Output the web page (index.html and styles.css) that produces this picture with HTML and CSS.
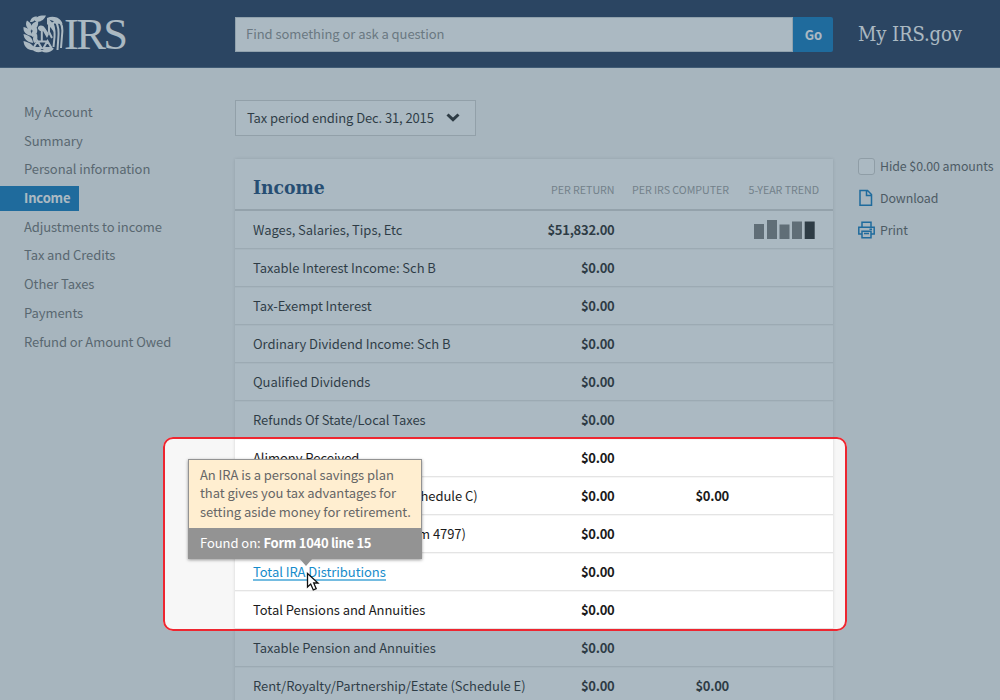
FILE: index.html
```html
<!DOCTYPE html>
<html lang="en">
<head>
<meta charset="utf-8">
<title>Income - My IRS.gov</title>
<link rel="stylesheet" href="styles.css">
</head>
<body>
<header class="topbar">
  <div class="brand">
    <svg class="emblem" width="41" height="38" viewBox="0 0 41 38" fill="#fff">
      <path d="M.5 12C6 13 9 16 9 21C3 20 0 17 .5 12ZM.5 19C6 20 10 23 10 28C4 27 1 24 .5 19ZM.5 26C6 27 11 30 12 35C5 36 1 32 .5 26ZM4 5.500C8 8 10 11 8 16C3 13 2 9 4 5.500ZM9 15.500C7 10 10 7 15 6C16 11 13 15 9 15.500ZM9 22C8 17 10 14 14 13C15 18 13 21 9 22ZM11 28C9 23 10 20 14 19C15 24 14 27 11 28ZM12 6C12 2 16 0 23 .5C21 5 17 8 12 6ZM7 7C8 3 10 1.500 14 1.500C13 5 11 7 7 7Z"/>
      <path d="M24 3C31 0 38 3 39.500 9L31 8.500L31.500 18L28 13L24 9ZM15 14C14 10 20 9 22 13L26 19L24 23L20 16L17 16ZM8 33.500C13 32 16 33 19 35C23 33 27 32 31 33.500C28 38 22 38 19 36.500C15 38 11 37 8 33.500Z"/>
      <g fill="none" stroke="#fff" stroke-width="2">
        <path d="M32 4Q40 6 39.300 17L38 33M31 5Q36 9 35.500 20L34.500 35M29 8Q32 12 31.500 22L30.500 32M26 9V17L29 23M18.800 15V27M12.500 26.500H25.500M14.500 26L10.500 33H18.500ZM24.500 26L20.500 33H28.500Z"/>
      </g>
      <path d="M26.500 4.800L31 6.200L29 7.400Z" fill="#162c51"/>
    </svg>
    <span class="brand-name">IRS</span>
  </div>
  <form class="search">
    <div class="search-field">Find something or ask a question</div>
    <div class="search-go">Go</div>
  </form>
  <div class="site-name">My IRS.gov</div>
</header>
<div class="layout">
  <nav class="sidenav">
    <a>My Account</a><a>Summary</a><a>Personal information</a><a class="current">Income</a><a>Adjustments to income</a><a>Tax and Credits</a><a>Other Taxes</a><a>Payments</a><a>Refund or Amount Owed</a>
  </nav>
  <main class="main">
    <div class="period"><span>Tax period ending Dec. 31, 2015</span>
      <svg width="14" height="10" viewBox="0 0 14 10"><path d="M1.500 1.500L7 6.700L12.500 1.500" fill="none" stroke="#1b1b1b" stroke-width="3"/></svg>
    </div>
    <section class="card">
      <div class="row head"><h1>Income</h1><span>PER RETURN</span><span>PER IRS COMPUTER</span><span>5-YEAR TREND</span></div>
      <div class="row"><span>Wages, Salaries, Tips, Etc</span><b>$51,832.00</b><b></b>
        <svg class="trend" width="62" height="19" viewBox="0 0 62 19"><path fill="#777" d="M0 4h10v15H0zM13 0h10v19H13zM25.500 4.500h10V19h-10zM38 1.500h10V19H38z"/><path fill="#1c1c1c" d="M50.700 1.500h10V19h-10z"/></svg></div>
      <div class="row"><span>Taxable Interest Income: Sch B</span><b>$0.00</b></div>
      <div class="row"><span>Tax-Exempt Interest</span><b>$0.00</b></div>
      <div class="row"><span>Ordinary Dividend Income: Sch B</span><b>$0.00</b></div>
      <div class="row"><span>Qualified Dividends</span><b>$0.00</b></div>
      <div class="row"><span>Refunds Of State/Local Taxes</span><b>$0.00</b></div>
      <div class="row"><span>Alimony Received</span><b>$0.00</b></div>
      <div class="row"><span>Business Income or Loss (Schedule C)</span><b>$0.00</b><b>$0.00</b></div>
      <div class="row"><span>Other Gains or (Losses) (Form 4797)</span><b>$0.00</b></div>
      <div class="row"><span><a class="link">Total IRA Distributions</a></span><b>$0.00</b></div>
      <div class="row"><span>Total Pensions and Annuities</span><b>$0.00</b></div>
      <div class="row"><span>Taxable Pension and Annuities</span><b>$0.00</b></div>
      <div class="row"><span>Rent/Royalty/Partnership/Estate (Schedule E)</span><b>$0.00</b><b>$0.00</b></div>
    </section>
  </main>
  <aside class="tools">
    <div><i class="checkbox"></i>Hide $0.00 amounts</div>
    <div><svg width="17" height="18" viewBox="0 0 17 18" fill="none" stroke="#0071bc" stroke-width="1.500"><path d="M2 1.500H9.500L13.500 5.500V16.300H2ZM8.500 1.500V6.500H13.500"/></svg>Download</div>
    <div><svg width="17" height="18" viewBox="0 0 17 18" fill="none" stroke="#0071bc" stroke-width="1.500"><path d="M4 6V1.200H13V6M4 13H.8V6.200H16.200V13H13M4 10.200H13V16.800H4ZM11.500 8.200H14M6 12.500H11"/></svg>Print</div>
  </aside>
</div>
<div class="spotlight"></div>
<div class="tooltip">
  <p>An IRA is a personal savings plan<br>that gives you tax advantages for<br>setting aside money for retirement.</p>
  <footer>Found on: <b>Form 1040 line 15</b></footer>
</div>
<svg class="cursor" width="14" height="20" viewBox="0 0 14 20"><path d="M1.500 1.500V15L4.700 12L7.300 18L10.200 16.700L7.700 11H12Z" fill="#fff" stroke="#111" stroke-width="1.300"/></svg>
</body>
</html>
```
FILE: styles.css
```css
* { box-sizing: border-box; }
body { margin: 0; width: 1000px; height: 700px; overflow: hidden; position: relative; background: #f7f7f7; color: #1b1b1b; font: 13px/20px "Noto Sans CJK SC", "Noto Sans", sans-serif; letter-spacing: -.05px; }
b { letter-spacing: -.28px; }
.topbar { height: 68px; display: grid; grid-template-columns: 235px 598px 1fr; background: #162c51; color: #fff; border-bottom: 1px solid #3c5573; }
.brand { display: flex; padding: 15px 0 0 23px; }
.brand-name { font: 44.500px/38px "Liberation Serif", serif; letter-spacing: -2.600px; }
.search { display: flex; height: 35px; margin-top: 17px; }
.search-field { width: 558px; background: #fff; color: #8a8a8a; padding: 6px 10px; border: 1px solid #d0d5d9; }
.search-go { width: 40px; background: #0071bc; font-weight: 700; text-align: center; line-height: 35px; padding-left: 1px; border-radius: 0 2px 2px 0; }
.site-name { font: 20px/30px "DejaVu Serif Condensed", "DejaVu Serif", serif; letter-spacing: -.1px; padding: 19px 0 0 25px; }
.layout { display: grid; grid-template-columns: 235px 598px 1fr; }
.sidenav { display: flex; flex-direction: column; align-items: flex-start; padding-top: 32px; color: #6b6b6b; letter-spacing: -.08px; }
.sidenav a { height: 24.700px; margin-bottom: 4px; padding: 0 10px 0 24px; line-height: 24px; }
.sidenav .current { background: #0071bc; color: #fff; font-weight: 700; padding-right: 9px; letter-spacing: -.15px; }
.main { padding-top: 32px; }
.period { width: 241px; height: 36px; display: flex; align-items: center; gap: 12px; padding-left: 11px; background: #fff; border: 1px solid #d2d2d2; margin-bottom: 23px; letter-spacing: -.11px; }
.card { height: 560px; background: #fff; box-shadow: 0 0 3px rgba(0,0,0,.15); }
.row { height: 38px; display: grid; grid-template-columns: 280px 81.500px 114.500px 90px; align-items: center; padding-left: 18px; border-bottom: 1px solid #e4e4e4; box-shadow: 0 1px #f6f6f6; white-space: nowrap; }
.row b, .head span { text-align: right; }
.row b { font-weight: 700; }
.head { height: 52px; border-bottom: 2px solid #d6d6d6; box-shadow: none; padding-top: 7px; }
.head span { font-size: 10.700px; color: #999; padding-top: 5px; }
.head h1 { margin: 0; font: bold 19.200px/28px "DejaVu Serif Condensed", "DejaVu Serif", serif; color: #0d3d70; }
.trend { justify-self: end; margin-right: 3.500px; }
.link { color: #168ccb; border-bottom: 2px solid #74bce1; display: inline-block; line-height: 15px; }
.tools { padding: 88px 0 0 25px; display: flex; flex-direction: column; gap: 12px; color: #555; font-size: 12.400px; letter-spacing: -.08px; white-space: nowrap; }
.tools div { height: 20px; display: flex; align-items: center; gap: 5px; }
.checkbox { width: 17px; height: 17px; border: 1px solid #ccc; border-radius: 3px; background: #fff; }
.spotlight { position: absolute; left: 163px; top: 437px; width: 684px; height: 194px; border: 2px solid #ee2630; border-radius: 10px; box-shadow: 0 0 0 1000px rgba(68,99,119,.45); }
.tooltip { position: absolute; left: 188px; top: 458.500px; width: 234px; height: 100px; border: 1px solid #939393; background: #ffeed0; color: #666; box-shadow: 0 1px 3px rgba(0,0,0,.4); white-space: nowrap; }
.tooltip p { margin: 0; height: 68px; padding: 6px 11px; line-height: 18.700px; }
.tooltip footer { height: 31px; padding: 0 11px; line-height: 30px; background: #939393; color: #fff; }
.tooltip::after { content: ""; position: absolute; left: 110px; top: 98px; border: solid transparent; border-width: 8px 7px 0; border-top-color: #939393; }
.cursor { position: absolute; left: 306px; top: 572px; }
```
